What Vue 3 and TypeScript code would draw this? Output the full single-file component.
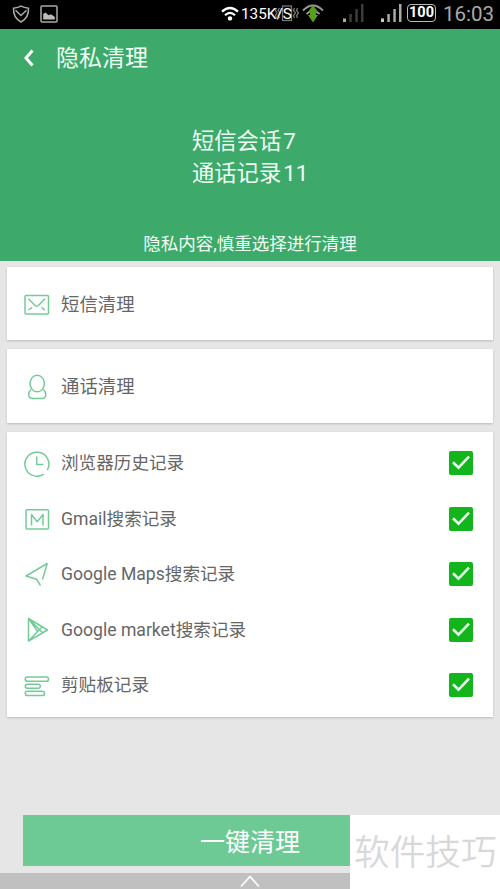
<script setup lang="ts">
import { ref } from 'vue'

interface HistoryItem {
  icon: 'clock' | 'mail' | 'maps' | 'market' | 'clipboard'
  label: string
  checked: boolean
}

const items = ref<HistoryItem[]>([
  { icon: 'clock', label: '浏览器历史记录', checked: true },
  { icon: 'mail', label: 'Gmail搜索记录', checked: true },
  { icon: 'maps', label: 'Google Maps搜索记录', checked: true },
  { icon: 'market', label: 'Google market搜索记录', checked: true },
  { icon: 'clipboard', label: '剪贴板记录', checked: true },
])
</script>

<template>
  <div class="screen">
    <div class="status">
      <svg class="s-shield" width="18" height="18" viewBox="0 0 18 18">
        <path d="M1.5 3.2Q6 2.8 9 1.2Q12 2.8 16.5 3.2Q17 12.5 9 17Q1 12.5 1.5 3.2Z" />
        <path d="M3.5 5.2L9 10.5L14.5 5.2" />
      </svg>
      <svg class="s-image" width="18" height="18" viewBox="0 0 18 18">
        <rect x="1" y="1" width="16" height="16" rx="1" />
        <path class="solid" d="M3.2 14.5V9L5.5 7.4L8.5 10.2L11 9.2L14.8 12V14.5Z" />
      </svg>
      <svg class="s-wifi" width="18" height="16" viewBox="0 0 18 16">
        <path d="M1 5.6Q9-1.6 17 5.6M4 9.3Q9 4.6 14 9.3" />
        <circle cx="9" cy="12.4" r="2.2" />
      </svg>
      <div class="speed">
        <svg class="vibrate" width="24" height="18" viewBox="0 0 24 18">
          <rect x="7.5" y="2" width="9" height="14.5" />
          <path d="M4.5 4L3 6.5L5 9L3 11.5L4.5 14M1.5 4L0.5 6.5L2 9L0.5 11.5L1.5 14M19.5 4L18.5 6.5L20.5 9L18.5 11.5L19.5 14M22.5 4L21.5 6.5L23.5 9L21.5 11.5L22.5 14" />
        </svg>
        <span class="rate">135K/S</span>
      </div>
      <svg class="s-data" width="22" height="20" viewBox="0 0 22 20">
        <path class="arc" d="M1 6.5Q11-3.5 21 6.5M4.5 10Q11 3.5 17.5 10" />
        <path class="arrow" d="M11 1L16 8H6ZM6 11H16L11 18.5ZM8 8H14V11H8Z" />
      </svg>
      <svg class="s-sim1" width="21" height="19" viewBox="0 0 21 19">
        <rect x="0" y="14.5" width="3" height="3.5" fill="#aaa" />
        <rect x="6.3" y="10" width="2.5" height="8" fill="#3c3c3c" />
        <rect x="12.3" y="5" width="2.5" height="13" fill="#3c3c3c" />
        <rect x="18" y="0" width="2.5" height="18" fill="#3c3c3c" />
      </svg>
      <svg class="s-sim2" width="21" height="19" viewBox="0 0 21 19">
        <rect x="0" y="14.5" width="3" height="3.5" fill="#ccc" />
        <rect x="6.3" y="10" width="2.5" height="8" fill="#aaa" />
        <rect x="12.3" y="5" width="2.5" height="13" fill="#aaa" />
        <rect x="18" y="0" width="2.5" height="18" fill="#aaa" />
      </svg>
      <div class="battery">100</div>
      <div class="time">16:03</div>
    </div>

    <header class="header">
      <div class="title">
        <svg width="12" height="20" viewBox="0 0 12 20"><path d="M9.5 2.5L3 10L9.5 17.5" /></svg>
        <h1>隐私清理</h1>
      </div>
      <div class="summary">
        <div>短信会话<span class="count">7</span></div>
        <div>通话记录<span class="count">11</span></div>
      </div>
      <p class="note">隐私内容,慎重选择进行清理</p>
    </header>

    <main class="content">
      <section class="card single">
        <svg class="icon" viewBox="0 0 26 26">
          <rect x="1" y="3.6" width="23.5" height="18.4" rx="1" />
          <path d="M4.5 6.8L11 13.5Q12.7 15 14.4 13.5L21 6.8M4.5 18.3L8 15.2M21 18.3L17.5 15.2" />
        </svg>
        <span class="label">短信清理</span>
      </section>
      <section class="card single">
        <svg class="icon" viewBox="0 0 26 26">
          <ellipse cx="13.2" cy="9.5" rx="7.2" ry="8.3" />
          <path d="M7 15.5Q4.3 18 4.6 21Q5 24.5 9 24.5H17.5Q21.5 24.5 21.8 21Q22 18 19.5 15.5" />
        </svg>
        <span class="label">通话清理</span>
      </section>
      <section class="card list">
        <div v-for="item in items" :key="item.icon" class="row">
          <svg class="icon" viewBox="0 0 26 26">
            <template v-if="item.icon === 'clock'">
              <path d="M19.7 23.1A12 12 0 1 1 23.3 19.2M12.7 5.5V13.5H19.3" />
            </template>
            <template v-else-if="item.icon === 'mail'">
              <rect x="2" y="3.8" width="22.5" height="19.2" rx="1" />
              <path d="M7.5 19.5V8.5L13.2 15.7L19 8.5V19.5" />
            </template>
            <template v-else-if="item.icon === 'maps'">
              <path d="M18.5 17.5L23.2 1.5L2 14L12.5 17.2L16.5 23.5" />
            </template>
            <template v-else-if="item.icon === 'market'">
              <path d="M4.5 1.5V24L23.5 13ZM4.5 1.5L18.5 15.7M4.5 24L18.2 9.8M4.5 1.5L13.5 14.2" />
            </template>
            <template v-else>
              <rect x="1.3" y="4.1" width="23.2" height="4.2" rx="2.1" />
              <rect x="1.3" y="11.3" width="15" height="4" rx="2" />
              <rect x="1.3" y="18.3" width="19.2" height="4.2" rx="2.1" />
            </template>
          </svg>
          <span class="label">{{ item.label }}</span>
          <button class="check" @click="item.checked = !item.checked">
            <svg v-if="item.checked" width="24" height="24" viewBox="0 0 24 24"><path d="M4 11.3L9.5 16.7L20 5.7" /></svg>
          </button>
        </div>
      </section>
    </main>

    <footer class="bottom">
      <button class="clean">一键清理</button>
      <div class="nav">
        <svg width="20" height="13" viewBox="0 0 20 13"><path d="M1 11.5L10 1.5L19 11.5" /></svg>
      </div>
      <div class="watermark">软件技巧</div>
    </footer>
  </div>
</template>

<style>
body {
  margin: 0;
  background: #e6e6e6;
}
</style>

<style scoped>
.screen {
  display: flex;
  flex-direction: column;
  width: 500px;
  height: 889px;
  overflow: hidden;
  background: #e6e6e6;
  font-family: Roboto, "Noto Sans CJK SC", sans-serif;
}
svg {
  display: block;
  flex: none;
  fill: none;
}
.status {
  display: flex;
  align-items: center;
  height: 29px;
  box-sizing: border-box;
  padding: 0 0 1px 12px;
  background: #000;
  color: #fff;
}
.s-shield, .s-image {
  margin-bottom: 1px;
  stroke: #aaa;
  stroke-width: 1.5;
}
.s-image { margin-left: 10px; }
.s-image .solid { fill: #bbb; stroke: none; }
.s-wifi {
  margin-left: 163px;
  stroke: #fff;
  stroke-width: 2.2;
}
.s-wifi circle { fill: #fff; stroke: none; }
.speed {
  position: relative;
  width: 53px;
  margin-left: 2px;
  font-size: 15.3px;
  line-height: 28px;
  white-space: nowrap;
}
.rate { position: relative; }
.vibrate {
  position: absolute;
  left: 34px;
  top: 4px;
  stroke: #777;
  stroke-width: 1.3;
}
.s-data { margin: 0 0 1px 8px; }
.arc { stroke: #999; stroke-width: 1.8; }
.arrow { fill: #579f18; }
.s-sim1 { margin: 0 0 1px 19px; }
.s-sim2 { margin: 0 0 1px 17px; }
.battery {
  box-sizing: border-box;
  width: 29px;
  height: 18px;
  margin: 0 0 2px 5px;
  border: 1px solid #bbb;
  border-radius: 4px;
  font-size: 14.5px;
  font-weight: 700;
  line-height: 16px;
  text-align: center;
}
.time {
  margin-left: 7px;
  color: #aaa;
  font-size: 20.5px;
  line-height: 26px;
}
.header {
  display: flex;
  flex-direction: column;
  height: 232px;
  flex: none;
  background: #3da96a;
  color: #effff3;
}
.title {
  display: flex;
  align-items: center;
  gap: 21px;
  height: 57px;
  padding-left: 23px;
}
.title svg {
  stroke: #fff;
  stroke-width: 3;
}
.title h1 {
  margin: 2px 0 0;
  font-size: 23px;
  font-weight: 400;
  line-height: 32px;
}
.summary {
  margin: 39px 0 0 192px;
  font-size: 22.3px;
  line-height: 32px;
}
.count { margin-left: 2px; }
.note {
  margin: 43px 0 0;
  font-size: 17.5px;
  line-height: 24px;
  text-align: center;
}
.content {
  display: flex;
  flex-direction: column;
  gap: 9px;
  padding: 6px 7px 0;
}
.card {
  background: #fff;
  box-shadow: 0 1px 2px #bbb;
}
.single, .row {
  display: flex;
  align-items: center;
  padding: 0 20px 0 17px;
}
.single {
  box-sizing: border-box;
  height: 73.4px;
  padding-top: 2px;
}
.list { padding: 4px 0 3px; }
.row { height: 55.6px; }
.icon {
  width: 26px;
  height: 26px;
  stroke: #75cb98;
  stroke-width: 1.5;
  stroke-linejoin: round;
}
.label {
  flex: 1;
  margin-left: 11px;
  color: #666;
  font-size: 17.6px;
  line-height: 27px;
}
.single .label { font-size: 18.4px; line-height: 26px; }
.check {
  width: 24px;
  height: 24px;
  margin-bottom: 1px;
  padding: 0;
  border: 0;
  border-radius: 2px;
  background: #12b51b;
}
.check path {
  stroke: #eaffea;
  stroke-width: 2.6;
}
.bottom {
  display: flex;
  flex-direction: column;
  position: relative;
  height: 74px;
  margin-top: auto;
}
.clean {
  height: 51px;
  margin: 0 23px;
  padding: 4px 0 0;
  border: 0;
  background: #6eca95;
  color: #fff;
  font: 400 25px/47px Roboto, "Noto Sans CJK SC", sans-serif;
}
.nav {
  display: flex;
  justify-content: center;
  height: 16px;
  margin-top: auto;
  background: #c0c0c0;
}
.nav svg {
  margin-top: 2px;
  stroke: #fff;
  stroke-width: 1.7;
}
.watermark {
  position: absolute;
  right: 0;
  top: 0;
  box-sizing: border-box;
  width: 150px;
  height: 74px;
  padding-left: 4px;
  background: #fff;
  color: #d8d8d8;
  font-size: 35.7px;
  font-weight: 350;
  line-height: 77px;
  white-space: nowrap;
}
</style>
